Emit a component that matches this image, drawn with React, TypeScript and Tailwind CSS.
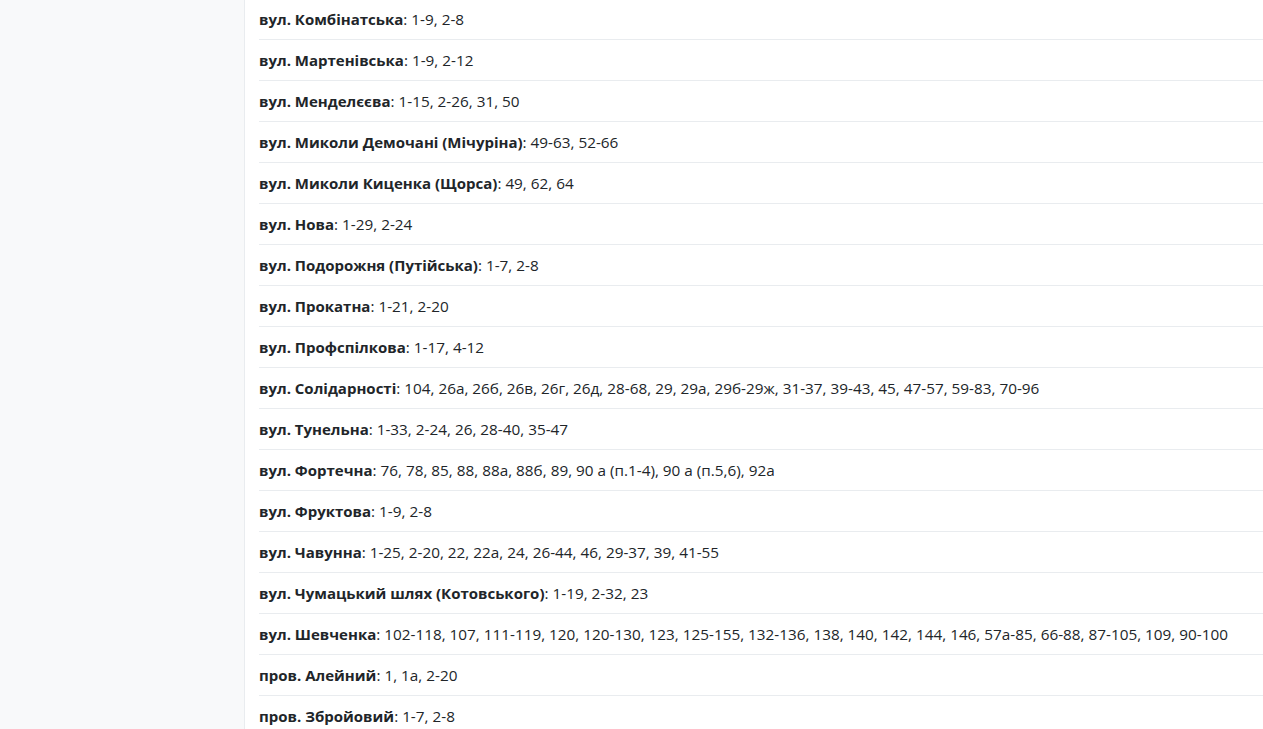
import React from "react";

const rows: [string, string][] = [
  ["вул. Комбінатська", "1-9, 2-8"],
  ["вул. Мартенівська", "1-9, 2-12"],
  ["вул. Менделєєва", "1-15, 2-26, 31, 50"],
  ["вул. Миколи Демочані (Мічуріна)", "49-63, 52-66"],
  ["вул. Миколи Киценка (Щорса)", "49, 62, 64"],
  ["вул. Нова", "1-29, 2-24"],
  ["вул. Подорожня (Путійська)", "1-7, 2-8"],
  ["вул. Прокатна", "1-21, 2-20"],
  ["вул. Профспілкова", "1-17, 4-12"],
  ["вул. Солідарності", "104, 26а, 26б, 26в, 26г, 26д, 28-68, 29, 29а, 29б-29ж, 31-37, 39-43, 45, 47-57, 59-83, 70-96"],
  ["вул. Тунельна", "1-33, 2-24, 26, 28-40, 35-47"],
  ["вул. Фортечна", "76, 78, 85, 88, 88а, 88б, 89, 90 а (п.1-4), 90 а (п.5,6), 92а"],
  ["вул. Фруктова", "1-9, 2-8"],
  ["вул. Чавунна", "1-25, 2-20, 22, 22а, 24, 26-44, 46, 29-37, 39, 41-55"],
  ["вул. Чумацький шлях (Котовського)", "1-19, 2-32, 23"],
  ["вул. Шевченка", "102-118, 107, 111-119, 120, 120-130, 123, 125-155, 132-136, 138, 140, 142, 144, 146, 57а-85, 66-88, 87-105, 109, 90-100"],
  ["пров. Алейний", "1, 1а, 2-20"],
  ["пров. Збройовий", "1-7, 2-8"],
];

export default function App() {
  return (
    <div
      className="flex h-[729px] overflow-hidden bg-white text-[#212529]"
      style={{ fontFamily: '"Open Sans", "Noto Sans", sans-serif' }}
    >
      <aside className="w-[245px] shrink-0 border-r border-[#e9ecef] bg-[#f8f9fa]" />
      <main className="flex-1 pl-[14px]">
        <ul className="-mt-px">
          {rows.map(([name, nums], i) => (
            <li
              key={i}
              className="flex h-[41px] items-center border-b border-[#e9ecef] text-[15px] leading-6 whitespace-pre"
            >
              <strong className="font-bold">{name}</strong>
              <span className="text-[15.3px]">: {nums}</span>
            </li>
          ))}
        </ul>
      </main>
    </div>
  );
}
